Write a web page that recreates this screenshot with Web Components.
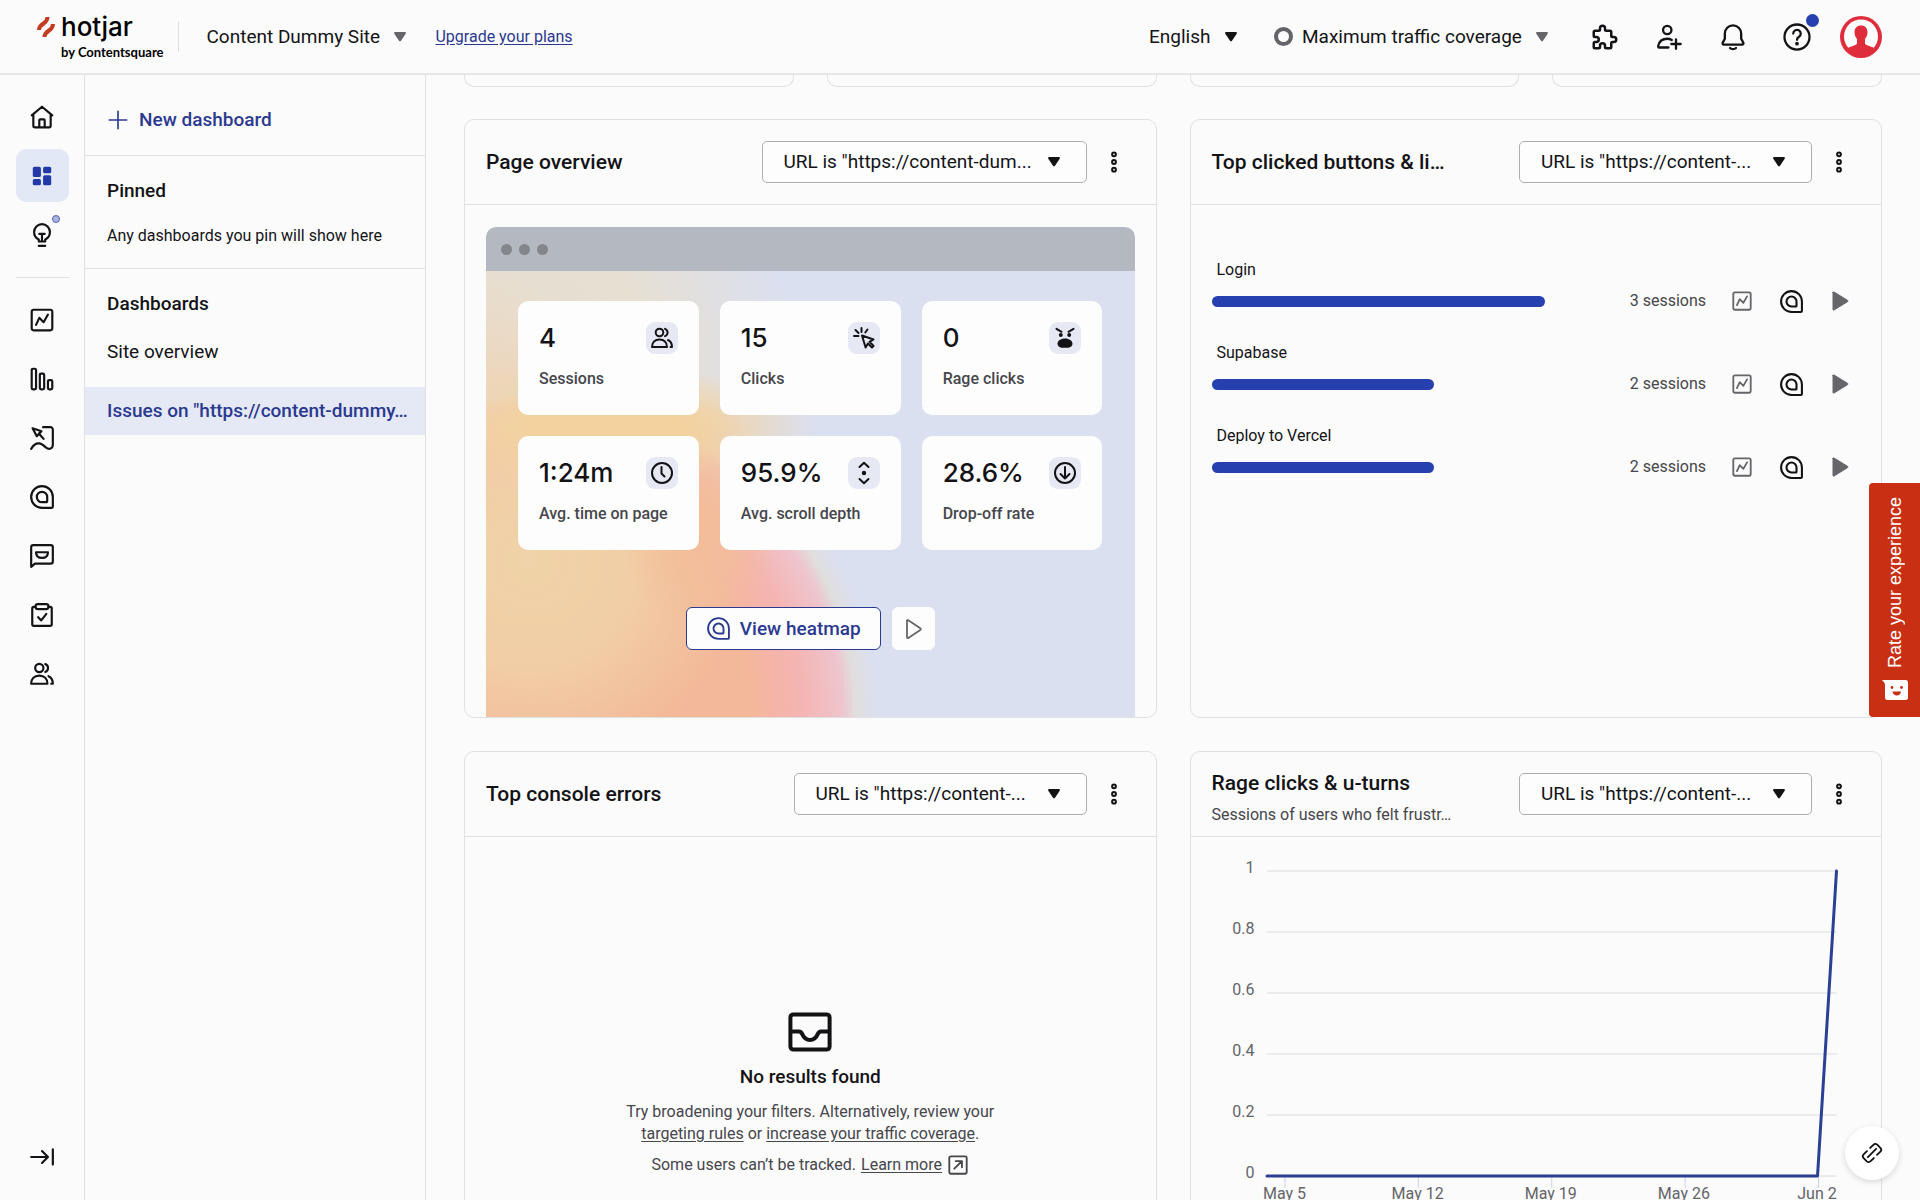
<!DOCTYPE html>
<html lang="en">
<head>
<meta charset="utf-8">
<title>Dashboards</title>
<style>
    html, body {
        margin: 0;
        height: 100%;
        overflow: hidden;
    }
    body {
        --bg: #fbfbfc;
        --ink: #131316;
        --muted: #46464b;
        --grey: #66666a;
        --line: #e0e0e3;
        --brand: #2b3990;
        --bar: #2640b0;
        --tint: #e5e8f5;
        background: var(--bg);
        color: var(--ink);
        font-family: Roboto, "Liberation Sans", sans-serif;
        font-size: 16px;
        line-height: 22px;
    }
</style>
</head>
<body>
<hj-app></hj-app>

<script>
// shared line icons, all on a 24 unit grid
const ICONS = {
    home: '<path d="M2.5 10.5L12 2.5l9.5 8M4 9.5V20a1.5 1.5 0 0 0 1.5 1.5h13A1.5 1.5 0 0 0 20 20V9.500M9.500 21V15a.8.8 0 0 1 .8-.8h3.400a.8.8 0 0 1 .8.8v6"/>',
    dashboard: '<g fill="currentColor" stroke="none"><rect x="3.500" y="3.500" width="7.500" height="9.500" rx="1.500"/><rect x="13" y="3.500" width="7.500" height="6" rx="1.500"/><rect x="3.500" y="14.800" width="7.500" height="5.800" rx="1.500"/><rect x="13" y="11.300" width="7.500" height="9.300" rx="1.500"/></g>',
    bulb: '<path d="M9 18v-1.800C6.500 15 4.700 12.500 4.700 9.300a7.300 7.300 0 0 1 14.600 0c0 3.200-1.800 5.700-4.300 6.900V18zM9 22h6M12 17.500v-6.500M9.500 11h5"/>',
    trends: '<rect x="2.500" y="2.500" width="19" height="19" rx="1.800"/><path d="M6.500 16.500l3-6.500 4 4L17.500 7"/>',
    bars: '<rect x="2.500" y="2.500" width="4" height="19" rx="1.300"/><rect x="10" y="7" width="4" height="14.500" rx="1.300"/><rect x="17.500" y="13" width="4" height="8.500" rx="1.300"/>',
    recording: '<path d="M3.300 3l8.200 2.700-4.300 4.600zM9 7.800l4.500 5"/><path d="M13 2h6.500A2.300 2.300 0 0 1 22 4.300V18c0 4-3.500 5.200-6.500 2.700C11.500 16.500 6.500 14.500 2 22"/>',
    heatmap: '<path d="M12 2a10 10 0 1 0 0 20h9a1 1 0 0 0 1-1v-9A10 10 0 0 0 12 2z"/><path d="M12 7.200a4.800 4.800 0 1 0 0 9.600h4a.8.8 0 0 0 .8-.8v-4A4.800 4.800 0 0 0 12 7.200z"/>',
    feedback: '<path d="M2 22V4a2 2 0 0 1 2-2h16a2 2 0 0 1 2 2v13a2 2 0 0 1-2 2H5.500z"/><path d="M6.500 8.500h11c0 3.500-2.300 5.300-5.500 5.300s-5.500-1.800-5.500-5.300z"/>',
    survey: '<path d="M6 4.500H4.500A1.500 1.500 0 0 0 3 6v14.500A1.500 1.500 0 0 0 4.500 22h15a1.500 1.500 0 0 0 1.500-1.500V6a1.500 1.500 0 0 0-1.500-1.500H18"/><rect x="6" y="2" width="12" height="4.500" rx="2.200"/><path d="M8.500 14l2.800 3 4.700-6"/>',
    people: '<circle cx="9.500" cy="6.500" r="3.800"/><path d="M15 2.900a3.800 3.800 0 0 1 0 7.200M2 21c0-4.500 3-7.500 7.500-7.500S17 16.500 17 21zM18 14c2.500 1 4 3.500 4 7h-1.500"/>',
    collapse: '<path d="M2 12h15M12 6.500l5.500 5.500-5.500 5.500M22 5v14"/>',
    plus: '<path d="M12 2.500v19M2.500 12h19"/>',
    puzzle: '<path d="M4 7h3a1 1 0 0 0 1-1V5a2 2 0 0 1 4 0v1a1 1 0 0 0 1 1h3a1 1 0 0 1 1 1v3a1 1 0 0 0 1 1h1a2 2 0 0 1 0 4h-1a1 1 0 0 0-1 1v3a1 1 0 0 1-1 1h-3a1 1 0 0 1-1-1v-1a2 2 0 0 0-4 0v1a1 1 0 0 1-1 1H4a1 1 0 0 1-1-1v-3a1 1 0 0 1 1-1h1a2 2 0 0 0 0-4H4a1 1 0 0 1-1-1V8a1 1 0 0 1 1-1"/>',
    invite: '<circle cx="10.500" cy="6" r="3.600"/><path d="M11.500 21H3.500c-.5 0-1-.5-.8-1.200C3.500 16 6.500 13.500 10.500 13.500c1.500 0 2.800.4 3.900 1M18 14v8M14 18h8"/>',
    bell: '<path d="M12 2a7 7 0 0 0-7 7v4.500l-1.800 3.300c-.4.800 0 1.700 1 1.700h15.600c1 0 1.400-.9 1-1.700L19 13.500V9a7 7 0 0 0-7-7zM9.500 21.500c1.300 1 3.700 1 5 0"/>',
    help: '<circle cx="12" cy="12" r="10"/><path d="M9 9.300a3 3 0 1 1 4.600 2.500c-1 .6-1.600 1.200-1.600 2.400"/><circle cx="12" cy="17.300" r=".6" fill="currentColor"/>',
    click: '<path d="M10 9.500l3.600 12 2.300-4 4.100 4 1.600-1.600-4.100-4.100 4-2.300zM9.500 2v4M2 10h4.500M3.500 4l3 3M15.500 3.500l-2.200 3"/>',
    rage: '<path d="M3.500 2.800l5 3M20.500 2.800l-5 3"/><g fill="currentColor" stroke="none"><circle cx="7.800" cy="9" r="2"/><circle cx="16.200" cy="9" r="2"/><path d="M12 12.500c4.300 0 7.500 2.300 7.500 5.300 0 2.200-2 3.900-4 3.900h-7c-2 0-4-1.700-4-3.900 0-3 3.200-5.300 7.500-5.300z"/></g>',
    clock: '<circle cx="12" cy="12" r="10"/><path d="M11.500 6v6.500l3 3"/>',
    scroll: '<path d="M7.500 6L12 1.800 16.500 6M7.500 18l4.500 4.200 4.500-4.200"/><circle cx="12" cy="12" r="1.200" fill="currentColor"/>',
    drop: '<circle cx="12" cy="12" r="10"/><path d="M12 6v11.500M7.500 13l4.500 4.500 4.500-4.500"/>',
    play: '<path d="M6 3.800v16.400c0 .8.700 1.100 1.300.7l12-8c.6-.4.6-1.300 0-1.700l-12-8C6.700 2.700 6 3 6 3.800z"/>',
    playSolid: '<path fill="currentColor" d="M5 3.500v17c0 .6.500.8 1 .5l13.500-8.300c.6-.4.6-1 0-1.400L6 3c-.5-.3-1-.1-1 .5z"/>',
    kebab: '<circle cx="12" cy="4.300" r="1.900"/><circle cx="12" cy="12" r="1.900"/><circle cx="12" cy="19.700" r="1.900"/>',
    inbox: '<rect x="2.200" y="3.200" width="19.600" height="17.600" rx="1.500"/><path d="M2.500 11.800h4c1 0 1.300.5 1.700 1.400.8 1.800 2 2.800 3.800 2.800s3-1 3.800-2.800c.4-.9.700-1.400 1.700-1.400h4"/>',
    external: '<rect x="2.500" y="2.500" width="19" height="19" rx="1.800"/><path d="M8 16l8-8M9.500 7.700h6.800v6.800"/>',
    link: '<path d="M10 6.500l3.200-3.200c1.400-1.400 3.200-1.500 4.500-.4l3.400 3.400c1.200 1.300 1.200 3.200-.2 4.500L17.500 14M14 17.500l-3.200 3.200c-1.400 1.400-3.200 1.500-4.500.4l-3.400-3.400c-1.200-1.300-1.200-3.200.2-4.500L6.500 10M7.500 16.500l2.500-2.500M14 10l2.500-2.500M10.500 13.500l3-3"/>'
};

class HjIcon extends HTMLElement {
    constructor() {
        super();
        this.attachShadow({ mode: 'open' });
    }
    connectedCallback() {
        const size = this.getAttribute('size') || 26;
        const stroke = this.getAttribute('stroke') || 2;
        this.shadowRoot.innerHTML = `
        <style>
            :host { display: inline-flex; flex: none; }
            svg { display: block; }
        </style>
        <svg width="${size}" height="${size}" viewBox="0 0 24 24" fill="none" stroke="currentColor"
            stroke-width="${stroke}" stroke-linecap="round" stroke-linejoin="round" aria-hidden="true">${ICONS[this.getAttribute('name')]}</svg>`;
    }
}

// drop-down; the chosen option comes from the "text" attribute
class HjSelect extends HTMLElement {
    constructor() {
        super();
        this.attachShadow({ mode: 'open' });
    }
    connectedCallback() {
        this.shadowRoot.innerHTML = `
        <style>
            :host { display: inline-flex; align-items: center; position: relative; flex: none; color: var(--ink); --caret: var(--grey); }
            :host([dark]) { --caret: var(--ink); }
            select {
                appearance: none;
                border: 0;
                margin: 0;
                padding: 0 26px 0 0;
                background: none;
                color: inherit;
                font: inherit;
                font-size: 19px;
                line-height: 28px;
                height: 42px;
            }
            svg { position: absolute; right: 0; pointer-events: none; color: var(--caret); }
            :host([boxed]) select {
                width: 100%;
                box-sizing: border-box;
                border: 1px solid #aeaeb2;
                border-radius: 5px;
                background: #fdfdfe;
                padding: 0 44px 0 21px;
            }
            :host([boxed]) svg { right: 27px; }
        </style>
        <select aria-label="${this.getAttribute('label')}"><option></option></select>
        <svg width="12" height="10" viewBox="0 0 12 10" aria-hidden="true"><path fill="currentColor" d="M1.200 0h9.600c.9 0 1.400 1 .9 1.700L7 8.800c-.5.700-1.500.7-2 0L.3 1.700C-.2 1 .3 0 1.200 0z"/></svg>`;
        this.shadowRoot.querySelector('option').textContent = this.getAttribute('text');
    }
}

class HjHeader extends HTMLElement {
    constructor() {
        super();
        this.attachShadow({ mode: 'open' });
        this.shadowRoot.innerHTML = `
        <style>
            :host { display: flex; align-items: center; height: 75px; border-bottom: 2px solid #e6e6e8; padding: 0 38px 0 37px; box-sizing: border-box; }
            .logo { display: grid; grid-template-columns: 18px auto; column-gap: 6px; color: #000; text-decoration: none; }
            .logo svg { margin-top: 3px; }
            .word { font: 500 26px/26px Inter, sans-serif; }
            .by { grid-column: 2; font: 700 13px/16px Lato, sans-serif; margin-top: 4px; }
            .rule { width: 1px; height: 31px; background: var(--line); margin: 0 27px 0 15px; }
            .plans { color: var(--brand); margin-left: 29px; text-underline-offset: 2px; }
            .right { display: flex; align-items: center; margin-left: auto; }
            .ring { width: 11px; height: 11px; border: 4px solid #646468; border-radius: 50%; margin: 0 9px 0 37px; }
            .tools { display: flex; gap: 22px; margin-left: 36px; }
            button { position: relative; display: flex; align-items: center; justify-content: center; width: 42px; height: 42px; padding: 0; border: 0; background: none; color: inherit; }
            .dot { position: absolute; top: -2px; right: -1px; width: 13px; height: 13px; border-radius: 50%; background: var(--bar); }
        </style>
        <a class="logo" href="#">
            <svg width="18" height="20" viewBox="0 0 18 20" fill="none" stroke="#c33b20" stroke-width="4"><path d="M10.500 0c0 3-1 4.500-4 6.500S2 10 2 13"/><path d="M16 7c0 3-1 4.500-4 6.500S7.500 17 7.500 20"/></svg>
            <span class="word">hotjar</span>
            <span class="by">by Contentsquare</span>
        </a>
        <span class="rule"></span>
        <hj-select label="Site" text="Content Dummy Site"></hj-select>
        <a class="plans" href="#">Upgrade your plans</a>
        <div class="right">
            <hj-select dark label="Language" text="English"></hj-select>
            <span class="ring"></span>
            <hj-select label="Traffic coverage" text="Maximum traffic coverage"></hj-select>
            <div class="tools">
                <button aria-label="Integrations"><hj-icon name="puzzle" size="30"></hj-icon></button>
                <button aria-label="Invite"><hj-icon name="invite" size="28"></hj-icon></button>
                <button aria-label="Notifications"><hj-icon name="bell" size="28"></hj-icon></button>
                <button aria-label="Help"><hj-icon name="help" size="30" stroke="1.8"></hj-icon><span class="dot"></span></button>
                <button aria-label="Account">
                    <svg width="42" height="42" viewBox="0 0 42 42"><circle cx="21" cy="21" r="21" fill="#e02d3c"/><circle cx="21" cy="20.500" r="17" fill="#fff"/><path fill="#e02d3c" d="M21 9.500c4 0 6.500 2.700 6.500 6.800 0 3-1 5-2.500 6.700v4.500c1 2.200 5.500 2.300 9 4.500-3 4.500-8 7-13 7s-10-2.500-13-7c3.500-2.200 8-2.300 9-4.500V23c-1.500-1.700-2.500-3.700-2.500-6.700 0-4.100 2.500-6.800 6.500-6.800z"/></svg>
                </button>
            </div>
        </div>`;
    }
}

class HjRail extends HTMLElement {
    constructor() {
        super();
        this.attachShadow({ mode: 'open' });
        const item = (name, label, extra = '') => `<a href="#" aria-label="${label}" ${extra}><hj-icon name="${name}"></hj-icon></a>`;
        this.shadowRoot.innerHTML = `
        <style>
            :host { display: flex; flex-direction: column; align-items: center; gap: 6px; width: 85px; padding: 15px 0 17px; border-right: 1px solid var(--line); box-sizing: border-box; flex: none; }
            a, button { position: relative; display: flex; align-items: center; justify-content: center; width: 53px; height: 53px; border: 0; border-radius: 10px; background: none; color: var(--ink); padding: 0; }
            a.on { background: #e3e8f7; color: #2439a8; }
            .dot { position: absolute; top: 7px; right: 9px; width: 6px; height: 6px; border: 1px solid #5563b4; border-radius: 50%; background: #aab3de; }
            hr { width: 53px; border: 0; border-top: 1px solid var(--line); margin: 10px 0 9px; }
            button { margin-top: auto; }
        </style>
        ${item('home', 'Home')}
        ${item('dashboard', 'Dashboards', 'class="on"')}
        <a href="#" aria-label="Highlights"><hj-icon name="bulb"></hj-icon><span class="dot"></span></a>
        <hr>
        ${item('trends', 'Trends')}
        ${item('bars', 'Funnels')}
        ${item('recording', 'Recordings')}
        ${item('heatmap', 'Heatmaps')}
        ${item('feedback', 'Feedback')}
        ${item('survey', 'Surveys')}
        ${item('people', 'Users')}
        <button aria-label="Expand menu"><hj-icon name="collapse"></hj-icon></button>`;
    }
}

class HjSidebar extends HTMLElement {
    constructor() {
        super();
        this.attachShadow({ mode: 'open' });
        this.shadowRoot.innerHTML = `
        <style>
            :host { display: block; width: 340px; border-right: 1px solid var(--line); flex: none; }
            section { padding: 0 22px; border-bottom: 1px solid var(--line); }
            section:last-child { border: 0; padding: 0; }
            .new { display: flex; align-items: center; gap: 10px; height: 80px; padding: 10px 0 0; border: 0; background: none; color: var(--brand); font: 500 19px/28px Roboto, sans-serif; box-sizing: border-box; }
            h2 { margin: 0; padding-top: 21px; font-size: 19px; line-height: 28px; font-weight: 500; }
            p { margin: 0; padding: 20px 0 21px; }
            section:last-child h2 { padding-left: 22px; margin-bottom: 10px; }
            a { display: block; height: 48px; margin-bottom: 11px; padding: 0 22px; font-size: 19px; line-height: 48px; color: inherit; text-decoration: none; white-space: nowrap; }
            a.on { background: var(--tint); color: var(--brand); font-weight: 500; }
        </style>
        <section><button class="new"><hj-icon name="plus" size="22" stroke="1.8"></hj-icon>New dashboard</button></section>
        <section>
            <h2>Pinned</h2>
            <p>Any dashboards you pin will show here</p>
        </section>
        <section>
            <h2>Dashboards</h2>
            <a href="#">Site overview</a>
            <a class="on" href="#">Issues on "https://content-dummy…</a>
        </section>`;
    }
}

// dashboard card: heading, url filter and menu on top, content in the slot
class HjCard extends HTMLElement {
    constructor() {
        super();
        this.attachShadow({ mode: 'open' });
    }
    connectedCallback() {
        const sub = this.getAttribute('sub');
        this.shadowRoot.innerHTML = `
        <style>
            :host { display: flex; flex-direction: column; min-width: 0; border: 1px solid var(--line); border-radius: 10px; overflow: hidden; }
            header { display: flex; align-items: center; height: 84px; padding: 0 21px; border-bottom: 1px solid var(--line); flex: none; }
            .titles { flex: 1; min-width: 0; white-space: nowrap; }
            h2 { margin: 0; font-size: 21px; line-height: 28px; font-weight: 500; }
            .titles.two { padding-top: 6px; }
            p { margin: 7px 0 0; color: var(--muted); }
            .filter { width: 293px; }
            .filter[wide] { width: 325px; }
            button { display: flex; align-items: center; justify-content: center; width: 42px; height: 42px; margin-left: 6px; padding: 0; border: 0; background: none; color: inherit; }
        </style>
        <header>
            <div class="titles ${sub ? 'two' : ''}"><h2></h2>${sub ? `<p>${sub}</p>` : ''}</div>
            <hj-select class="filter" boxed dark label="Filter" ${this.hasAttribute('wide') ? 'wide' : ''}></hj-select>
            <button aria-label="More options"><hj-icon name="kebab" size="24" stroke="2"></hj-icon></button>
        </header>
        <slot></slot>`;
        this.shadowRoot.querySelector('h2').textContent = this.getAttribute('heading');
        const filter = this.shadowRoot.querySelector('hj-select');
        filter.setAttribute('text', this.getAttribute('url'));
        filter.connectedCallback();
    }
}

class HjStat extends HTMLElement {
    constructor() {
        super();
        this.attachShadow({ mode: 'open' });
    }
    connectedCallback() {
        this.shadowRoot.innerHTML = `
        <style>
            :host { display: block; box-sizing: border-box; height: 114px; padding: 21px; border-radius: 10px; background: #fdfdfe; white-space: nowrap; }
            .top { display: flex; justify-content: space-between; align-items: center; height: 32px; margin-bottom: 14px; }
            strong { font: 500 26px/32px Inter, sans-serif; }
            .badge { display: flex; align-items: center; justify-content: center; width: 32px; height: 32px; border-radius: 9px; background: #e6e8f3; }
            .label { font-weight: 500; color: var(--muted); }
        </style>
        <div class="top"><strong>${this.getAttribute('value')}</strong><span class="badge"><hj-icon name="${this.getAttribute('icon')}" size="24"></hj-icon></span></div>
        <div class="label"><slot></slot></div>`;
    }
}

class HjPageOverview extends HTMLElement {
    constructor() {
        super();
        this.attachShadow({ mode: 'open' });
        this.shadowRoot.innerHTML = `
        <style>
            :host { display: flex; flex-direction: column; flex: 1; margin: 22px 21px 0; border-radius: 10px 10px 0 0; overflow: hidden; }
            .chrome { display: flex; align-items: center; gap: 7px; height: 44px; padding-left: 15px; background: #b4b9c1; }
            .chrome i { width: 11px; height: 11px; border-radius: 50%; background: #83878c; }
            .stage {
                flex: 1;
                padding: 30px 32px 0;
                background:
                    radial-gradient(ellipse 210px 60px at 120px 155px, #f3d2a0 0, #f3d2a0 40%, #f3d2a000 100%),
                    radial-gradient(ellipse 80px 120px at 215px 250px, #f3bd99 0, #f3bd99aa 50%, #f3bd9900 100%),
                    radial-gradient(ellipse 210px 210px at 45px 290px, #f0d3a8 0, #f1d3a8cc 50%, #f1d3a800 100%),
                    radial-gradient(circle at 48px 447px, #f3b899 0, #f3b899 215px, #f5b4a6 240px, #f4b5b3 270px, #eec4cd 308px, #e0dedd 322px, #dbe0f000 342px),
                    radial-gradient(ellipse 120px 190px at 0 190px, #f2cfb0 0, #f2cfb000 100%),
                    radial-gradient(ellipse 290px 260px at 20px 90px, #e7dfd0 0, #e6dfd2 50%, #dbe0f000 100%),
                    #dbe0f0;
            }
            .stats { display: grid; grid-template-columns: repeat(3, 1fr); gap: 21px; }
            .actions { display: flex; justify-content: center; gap: 11px; margin-top: 57px; }
            button { display: flex; align-items: center; justify-content: center; gap: 9px; height: 43px; padding: 0 19px; border: 1px solid var(--brand); border-radius: 6px; background: #fdfdfe; color: var(--brand); font: 500 19px/28px Roboto, sans-serif; }
            button.square { width: 43px; padding: 0; border-color: #fdfdfe; color: var(--grey); }
        </style>
        <div class="chrome"><i></i><i></i><i></i></div>
        <div class="stage">
            <div class="stats">
                <hj-stat value="4" icon="people">Sessions</hj-stat>
                <hj-stat value="15" icon="click">Clicks</hj-stat>
                <hj-stat value="0" icon="rage">Rage clicks</hj-stat>
                <hj-stat value="1:24m" icon="clock">Avg. time on page</hj-stat>
                <hj-stat value="95.9%" icon="scroll">Avg. scroll depth</hj-stat>
                <hj-stat value="28.6%" icon="drop">Drop-off rate</hj-stat>
            </div>
            <div class="actions">
                <button><hj-icon name="heatmap" size="25" stroke="1.8"></hj-icon>View heatmap</button>
                <button class="square" aria-label="Play recordings"><hj-icon name="play" size="24" stroke="1.8"></hj-icon></button>
            </div>
        </div>`;
    }
}

class HjClickRow extends HTMLElement {
    constructor() {
        super();
        this.attachShadow({ mode: 'open' });
    }
    connectedCallback() {
        const count = Number(this.getAttribute('count'));
        this.shadowRoot.innerHTML = `
        <style>
            :host { display: block; }
            .name { padding-left: 5px; }
            .row { display: flex; align-items: center; height: 32px; margin-top: 4px; }
            .track { flex: 1; margin-right: 84px; }
            .fill { width: ${count / 3 * 100}%; height: 11px; border-radius: 6px; background: var(--bar); }
            .count { width: 77px; text-align: right; color: var(--muted); margin-right: 16px; white-space: nowrap; }
            .tools { display: flex; gap: 9px; }
            button { display: flex; align-items: center; justify-content: center; width: 40px; height: 32px; border: 0; padding: 0; background: none; color: var(--ink); }
            button.grey { color: var(--grey); }
        </style>
        <div class="name"><slot></slot></div>
        <div class="row">
            <div class="track"><div class="fill"></div></div>
            <span class="count">${count} sessions</span>
            <div class="tools">
                <button class="grey" aria-label="Trends"><hj-icon name="trends" size="22"></hj-icon></button>
                <button aria-label="Heatmap"><hj-icon name="heatmap" size="25"></hj-icon></button>
                <button class="grey" aria-label="Recordings"><hj-icon name="playSolid" size="24" stroke="1"></hj-icon></button>
            </div>
        </div>`;
    }
}

class HjEmpty extends HTMLElement {
    constructor() {
        super();
        this.attachShadow({ mode: 'open' });
        this.shadowRoot.innerHTML = `
        <style>
            :host { display: flex; flex-direction: column; align-items: center; padding-top: 171px; text-align: center; color: var(--muted); }
            hj-icon { color: var(--ink); }
            h3 { margin: 7px 0 10px; font-size: 19px; line-height: 28px; font-weight: 500; color: var(--ink); }
            p { margin: 0 0 9px; }
            .more { display: flex; align-items: center; gap: 5px; }
            .more hj-icon { color: var(--muted); }
            a { color: inherit; text-underline-offset: 2px; }
        </style>
        <hj-icon name="inbox" size="48" stroke="2"></hj-icon>
        <h3>No results found</h3>
        <p>Try broadening your filters. Alternatively, review your<br><a href="#">targeting rules</a> or <a href="#">increase your traffic coverage</a>.</p>
        <p class="more">Some users can’t be tracked. <a href="#">Learn more</a><hj-icon name="external" size="22"></hj-icon></p>`;
    }
}

class HjChart extends HTMLElement {
    constructor() {
        super();
        this.attachShadow({ mode: 'open' });
        const ticks = ['1', '0.8', '0.6', '0.4', '0.2', '0'];
        const days = ['May 5', 'May 12', 'May 19', 'May 26', 'Jun 2'];
        // plot is 570 x 305 units and stretches with the card
        const grid = ticks.map((t, i) => `<path stroke="#dcdce0" d="M0 ${i * 61}H570"/>`).join('');
        const marks = days.map((d, i) => `<path stroke="#ccd3ec" d="M${18 + i * 133.5} 305v12"/>`).join('');
        this.shadowRoot.innerHTML = `
        <style>
            :host { display: grid; grid-template-columns: 42px 1fr; column-gap: 12px; padding: 34px 45px 40px 22px; color: #646468; }
            .y { display: flex; flex-direction: column; justify-content: space-between; height: 327px; margin-top: -14px; text-align: right; }
            svg { display: block; width: 100%; height: 305px; overflow: visible; }
            svg path { vector-effect: non-scaling-stroke; fill: none; }
            .x { grid-column: 2; display: flex; justify-content: space-between; margin: -1px -16px 0 -17px; white-space: nowrap; }
            .x span { width: 70px; text-align: center; }
        </style>
        <div class="y">${ticks.map(t => `<span>${t}</span>`).join('')}</div>
        <svg viewBox="0 0 570 305" preserveAspectRatio="none" aria-hidden="true">
            ${grid}${marks}
            <path stroke="#2b3f95" stroke-width="3" stroke-linejoin="round" stroke-linecap="round" d="M0 305H551L570 0"/>
        </svg>
        <div class="x">${days.map(d => `<span>${d}</span>`).join('')}</div>`;
    }
}

class HjBoard extends HTMLElement {
    constructor() {
        super();
        this.attachShadow({ mode: 'open' });
        this.shadowRoot.innerHTML = `
        <style>
            :host { display: block; flex: 1; min-width: 0; padding: 0 38px; overflow: hidden; }
            .strip, .cards { display: grid; gap: 33px; }
            .strip { grid-template-columns: repeat(4, 1fr); margin-bottom: 32px; }
            .strip div { height: 11px; border: 1px solid var(--line); border-top: 0; border-radius: 0 0 10px 10px; }
            .cards { grid-template-columns: repeat(2, minmax(0, 1fr)); grid-auto-rows: 599px; }
            .list { display: grid; gap: 25px; padding: 54px 21px 0; }
        </style>
        <div class="strip"><div></div><div></div><div></div><div></div></div>
        <div class="cards">
            <hj-card wide heading="Page overview" url='URL is "https://content-dum...'><hj-page-overview></hj-page-overview></hj-card>
            <hj-card heading="Top clicked buttons &amp; li…" url='URL is "https://content-...'>
                <div class="list">
                    <hj-click-row count="3">Login</hj-click-row>
                    <hj-click-row count="2">Supabase</hj-click-row>
                    <hj-click-row count="2">Deploy to Vercel</hj-click-row>
                </div>
            </hj-card>
            <hj-card heading="Top console errors" url='URL is "https://content-...'><hj-empty></hj-empty></hj-card>
            <hj-card heading="Rage clicks &amp; u-turns" sub="Sessions of users who felt frustr…" url='URL is "https://content-...'><hj-chart></hj-chart></hj-card>
        </div>`;
    }
}

class HjFeedbackTab extends HTMLElement {
    constructor() {
        super();
        this.attachShadow({ mode: 'open' });
        this.shadowRoot.innerHTML = `
        <style>
            :host { position: fixed; right: 0; top: 483px; }
            button { display: flex; flex-direction: column; align-items: center; justify-content: center; gap: 12px; width: 51px; height: 234px; padding: 0 0 3px; border: 0; border-radius: 4px 0 0 4px; background: #c93013; color: #fff; }
            span { writing-mode: vertical-rl; transform: rotate(180deg); font: 18px/22px "Liberation Sans", Arial, sans-serif; }
        </style>
        <button>
            <span>Rate your experience</span>
            <svg width="26" height="20" viewBox="0 0 26 20" aria-hidden="true"><path fill="#fff" d="M0 0h23.500A2.500 2.500 0 0 1 26 2.500v15a2.500 2.500 0 0 1-2.500 2.500h-18A2.500 2.500 0 0 1 3 17.500V5C3 3 1.500 1.500 0 0z"/><g fill="#c93013"><circle cx="10" cy="7.500" r="1.400"/><circle cx="19.500" cy="7.500" r="1.400"/><path d="M10.500 11.500h8.500c-.3 2.500-2 4-4.200 4s-4-1.500-4.300-4z"/></g></svg>
        </button>`;
    }
}

class HjLinkFab extends HTMLElement {
    constructor() {
        super();
        this.attachShadow({ mode: 'open' });
        this.shadowRoot.innerHTML = `
        <style>
            :host { position: fixed; right: 21px; bottom: 20px; }
            button { display: flex; align-items: center; justify-content: center; width: 54px; height: 54px; padding: 0; border: 0; border-radius: 50%; background: #fff; color: var(--ink); box-shadow: 0 2px 6px rgba(0, 0, 0, 0.14); }
        </style>
        <button aria-label="Copy link"><hj-icon name="link" size="22"></hj-icon></button>`;
    }
}

class HjApp extends HTMLElement {
    constructor() {
        super();
        this.attachShadow({ mode: 'open' });
        this.shadowRoot.innerHTML = `
        <style>
            :host { display: flex; flex-direction: column; height: 100vh; }
            .body { display: flex; flex: 1; min-height: 0; }
        </style>
        <hj-header></hj-header>
        <div class="body">
            <hj-rail></hj-rail>
            <hj-sidebar></hj-sidebar>
            <hj-board></hj-board>
        </div>
        <hj-feedback-tab></hj-feedback-tab>
        <hj-link-fab></hj-link-fab>`;
    }
}

customElements.define('hj-icon', HjIcon);
customElements.define('hj-select', HjSelect);
customElements.define('hj-header', HjHeader);
customElements.define('hj-rail', HjRail);
customElements.define('hj-sidebar', HjSidebar);
customElements.define('hj-card', HjCard);
customElements.define('hj-stat', HjStat);
customElements.define('hj-page-overview', HjPageOverview);
customElements.define('hj-click-row', HjClickRow);
customElements.define('hj-empty', HjEmpty);
customElements.define('hj-chart', HjChart);
customElements.define('hj-board', HjBoard);
customElements.define('hj-feedback-tab', HjFeedbackTab);
customElements.define('hj-link-fab', HjLinkFab);
customElements.define('hj-app', HjApp);
</script>
</body>
</html>
